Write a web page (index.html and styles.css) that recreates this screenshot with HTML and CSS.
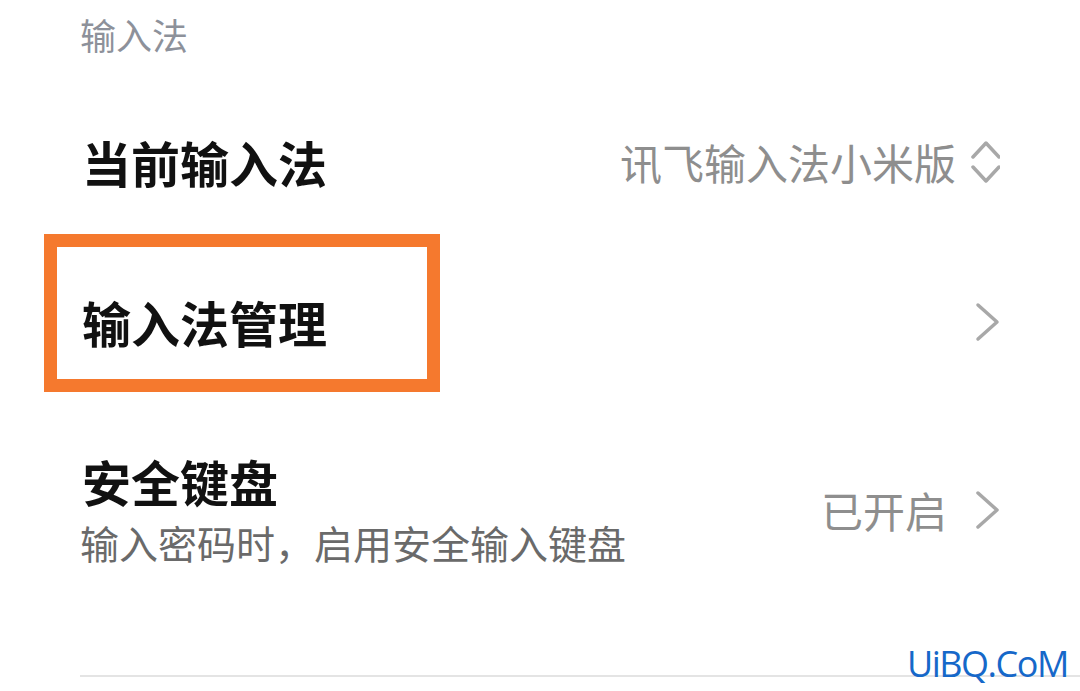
FILE: index.html
```html
<!DOCTYPE html>
<html lang="zh-CN">
<head>
    <meta charset="UTF-8">
    <meta name="viewport" content="width=device-width, initial-scale=1.0">
    <title>输入法</title>
    <link rel="stylesheet" href="styles.css">
</head>
<body>

<div class="page">
    <div class="section-title">输入法</div>

    <div class="row row-single">
        <div class="title">当前输入法</div>
        <div class="value">
            <span>讯飞输入法小米版</span>
            <svg class="updown" width="32" height="44" viewBox="0 0 32 44">
                <polyline points="5,17 18,3 31,17" />
                <polyline points="5,27 18,41 31,27" />
            </svg>
        </div>
    </div>

    <div class="row row-single row-marked">
        <div class="title">输入法管理</div>
        <div class="value">
            <svg class="chevron" width="32" height="40" viewBox="0 0 32 40">
                <polyline points="10,3 29,20 10,37" />
            </svg>
        </div>
        <div class="mark"></div>
    </div>

    <div class="row row-double">
        <div class="text">
            <div class="title">安全键盘</div>
            <div class="subtitle">输入密码时，启用安全输入键盘</div>
        </div>
        <div class="value">
            <span>已开启</span>
            <svg class="chevron" width="32" height="40" viewBox="0 0 32 40">
                <polyline points="10,3 29,20 10,37" />
            </svg>
        </div>
    </div>

    <div class="divider"></div>

    <div class="watermark">UiBQ.CoM</div>
</div>

</body>
</html>
```

FILE: styles.css
```css
body {
    margin: 0;
    background: #fff;
    font-family: "Noto Sans CJK SC", sans-serif;
}
.page {
    position: relative;
    width: 1080px;
    height: 691px;
    overflow: hidden;
}
.section-title {
    padding: 16px 0 0 80px;
    font-size: 36px;
    line-height: 36px;
    color: #8d919a;
    margin-bottom: 30px;
}
.row {
    display: flex;
    align-items: center;
    justify-content: space-between;
    padding: 0 80px 0 82px;
}
.row-single {
    height: 160px;
}
.row-double {
    padding-top: 51px;
    padding-bottom: 50px;
}
.title {
    font-size: 49px;
    line-height: 56px;
    font-weight: 700;
    color: #111;
}
.subtitle {
    margin-top: 8px;
    margin-left: -2px;
    font-size: 39px;
    line-height: 50px;
    color: #6a6a6a;
}
.value {
    display: flex;
    align-items: center;
    gap: 12px;
    font-size: 42px;
    line-height: 50px;
    color: #8e8e8e;
}
.value svg {
    fill: none;
    stroke: #a8a8a8;
    stroke-width: 3.5;
    stroke-linecap: round;
    stroke-linejoin: round;
}
.row-double .value .chevron {
    margin-left: 9px;
}
.row-marked {
    position: relative;
}
.mark {
    position: absolute;
    left: 44px;
    top: -8px;
    width: 396px;
    height: 158px;
    box-sizing: border-box;
    border: 13px solid #f5792e;
}
.divider {
    margin: 58px 0 0 80px;
    height: 2px;
    background: #e4e4e4;
}
.watermark {
    position: absolute;
    left: 907px;
    top: 644px;
    font-family: "Open Sans", sans-serif;
    font-size: 36px;
    line-height: 40px;
    letter-spacing: -1.5px;
    color: #1668c9;
}
```
